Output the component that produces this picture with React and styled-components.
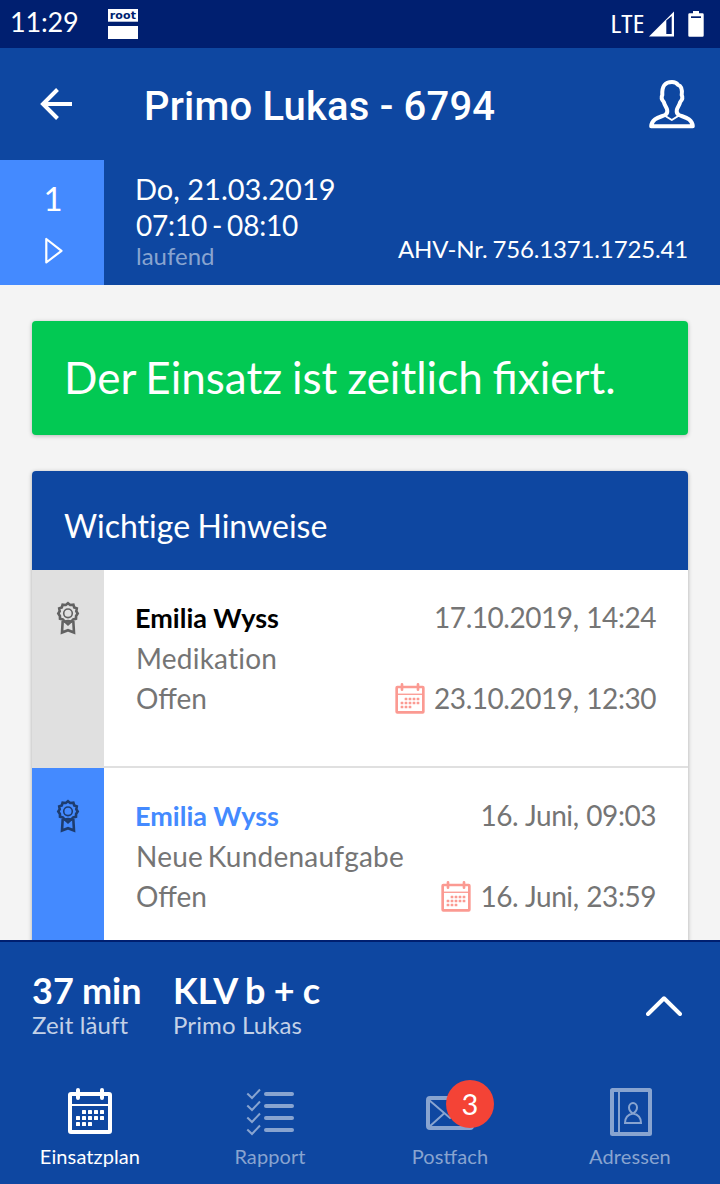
import styled, { createGlobalStyle } from "styled-components";

const colors = {
  status: "#001f70",
  primary: "#0e47a1",
  accent: "#448aff",
  green: "#02c953",
  red: "#f44336",
  muted: "#757575",
  faded: "#88a4d0",
  line: "#e0e0e0",
};

const notes = [
  { name: "Emilia Wyss", created: "17.10.2019, 14:24", title: "Medikation", state: "Offen", due: "23.10.2019, 12:30", unread: false },
  { name: "Emilia Wyss", created: "16. Juni, 09:03", title: "Neue Kundenaufgabe", state: "Offen", due: "16. Juni, 23:59", unread: true },
];

const App = () => {
  return (
    <>
      <GlobalStyle />
      <Screen>
        <StatusBar>
          <Clock>11:29</Clock>
          <RootBadge>
            <RootLabel>root</RootLabel>
            <RootBlock />
          </RootBadge>
          <Network>LTE</Network>
          <SignalIcon />
          <BatteryIcon />
        </StatusBar>
        <Header>
          <BackIcon />
          <Title>Primo Lukas - 6794</Title>
          <PersonIcon />
        </Header>
        <VisitInfo>
          <VisitIndex>
            <VisitNumber>1</VisitNumber>
            <PlayIcon />
          </VisitIndex>
          <VisitTimes>
            <VisitDate>Do, 21.03.2019</VisitDate>
            <VisitTime>07:10 - 08:10</VisitTime>
            <VisitState>laufend</VisitState>
          </VisitTimes>
          <Insurance>AHV-Nr. 756.1371.1725.41</Insurance>
        </VisitInfo>
        <Content>
          <Banner>Der Einsatz ist zeitlich fixiert.</Banner>
          <Card>
            <CardHeader>Wichtige Hinweise</CardHeader>
            {notes.map((note) => (
              <NoteRow key={note.created} {...note} />
            ))}
          </Card>
        </Content>
        <TimerBar>
          <TimerItem $width={141}>
            <TimerValue>37 min</TimerValue>
            <TimerLabel>Zeit läuft</TimerLabel>
          </TimerItem>
          <TimerItem>
            <TimerValue>KLV b + c</TimerValue>
            <TimerLabel>Primo Lukas</TimerLabel>
          </TimerItem>
          <ChevronIcon />
        </TimerBar>
        <TabBar>
          <Tab $active>
            <TabIcon><CalendarIcon size={48} /></TabIcon>
            Einsatzplan
          </Tab>
          <Tab>
            <TabIcon><ChecklistIcon /></TabIcon>
            Rapport
          </Tab>
          <Tab>
            <TabIcon>
              <MailIcon />
              <Badge>3</Badge>
            </TabIcon>
            Postfach
          </Tab>
          <Tab>
            <TabIcon><AddressIcon /></TabIcon>
            Adressen
          </Tab>
        </TabBar>
      </Screen>
    </>
  );
};

export default App;

const NoteRow = ({ name, created, title, state, due, unread }) => (
  <Row>
    <RowMarker $unread={unread}>
      <AwardIcon />
    </RowMarker>
    <RowBody>
      <RowLine>
        <Author $unread={unread}>{name}</Author>
        <DateText $raised>{created}</DateText>
      </RowLine>
      <RowLine>
        <NoteTitle>{title}</NoteTitle>
      </RowLine>
      <RowLine>
        <NoteState>{state}</NoteState>
        <Due>
          <CalendarIcon size={32} />
          <DateText>{due}</DateText>
        </Due>
      </RowLine>
    </RowBody>
  </Row>
);

const SignalIcon = () => (
  <svg width="26" height="26" viewBox="0 0 26 26">
    <path d="M0 25.5 L25 0.5 V25.5 Z M17.3 9.5 V23 H22.7 V5 Z" fill="#fff" fillRule="evenodd" />
  </svg>
);

const BatteryIcon = () => (
  <Battery width="16" height="26" viewBox="0 0 16 26">
    <path d="M5 0 H11 V2.3 H14.5 Q15.7 2.3 15.7 3.5 V24.5 Q15.7 25.8 14.5 25.8 H1.5 Q0.3 25.8 0.3 24.5 V3.5 Q0.3 2.3 1.5 2.3 H5 Z" fill="#fff" />
    <path d="M3 5.3 H13 V7 H3 Z" fill={colors.status} />
  </Battery>
);

const BackIcon = () => (
  <svg width="32" height="32" viewBox="0 0 32 32" fill="none" stroke="#fff" strokeWidth="4">
    <path d="M32 16 H3 M17.5 1.5 L3 16 L17.5 30.5" />
  </svg>
);

const PersonIcon = () => (
  <svg width="46" height="50" viewBox="0 0 46 50" fill="none" stroke="#fff" strokeWidth="4" strokeLinejoin="round">
    <path d="M23 3 C16 3 12.8 7 13.3 16 C12.2 18 13 21 14.8 23 C15.8 27 17.8 28.5 18.2 31 C18.7 34 17.8 35 16 36 C12 38 2.7 38.8 2.2 47.3 H43.8 C43.3 38.8 34 38 30 36 C28.2 35 27.3 34 27.8 31 C28.2 28.5 30.2 27 31.2 23 C33 21 33.8 18 32.7 16 C33.5 10 32.3 6.8 29 5.8 C27.5 3.6 25.8 3 23 3 Z" />
    <path d="M15.5 36.5 L22.8 41 L30 36.5" strokeWidth="2" />
  </svg>
);

const PlayIcon = () => (
  <Play width="18" height="28" viewBox="0 0 18 28" fill="none" stroke="#fff" strokeWidth="2.2" strokeLinejoin="round">
    <path d="M1.3 2 V25.5 L16.5 13.8 Z" />
  </Play>
);

const AwardIcon = () => (
  <svg width="24" height="34" viewBox="0 0 24 34" opacity="0.56" fill="none" stroke="#000" strokeWidth="2.6">
    <path d="M12 2.2 L14.2 4 L17.4 3.7 L18.2 6.4 L20.8 7.4 L20.3 10.2 L21.7 12.5 L20.1 15 L20 17.8 L17.2 18.4 L15.2 20.6 L12 20 L8.8 20.6 L6.8 18.4 L4 17.8 L3.9 15 L2.3 12.5 L3.7 10.2 L3.2 7.4 L5.8 6.4 L6.6 3.7 L9.8 4 Z" />
    <circle cx="12" cy="12.3" r="4.3" strokeWidth="1.6" />
    <path d="M6.7 20 L6 31.5 L12 29.2 L18 31.5 L17.3 20 M9 20.5 L12 23.3 L15 20.5" />
  </svg>
);

const dots = [[2, 0], [3, 0], [4, 0], [5, 0], [1, 1], [2, 1], [3, 1], [4, 1], [5, 1], [1, 2], [2, 2], [3, 2]];

const CalendarIcon = ({ size }) => (
  <svg width={size} height={size} viewBox="0 0 48 48" fill="none" stroke="currentColor" strokeWidth="4">
    <rect x="4" y="6" width="40" height="38" rx="1" />
    <path d="M4 16.9 H44" strokeWidth="2" />
    <path d="M12 2 V10 M36 2 V10" strokeLinecap="round" />
    {dots.map(([col, row]) => (
      <rect key={`${col}-${row}`} x={4 + col * 6} y={22 + row * 6} width="4" height="4" rx="0.6" fill="currentColor" stroke="none" />
    ))}
  </svg>
);

const ChecklistIcon = () => (
  <svg width="48" height="48" viewBox="0 0 48 48" fill="none" stroke="currentColor">
    {[0, 12, 24, 36].map((y) => (
      <g key={y}>
        <path d={`M1.3 ${y + 5.5} L6 ${y + 10} L14 ${y + 1.5}`} strokeWidth="2" />
        <path d={`M20 ${y + 6} H46`} strokeWidth="4" strokeLinecap="round" />
      </g>
    ))}
  </svg>
);

const MailIcon = () => (
  <svg width="48" height="48" viewBox="0 0 48 48" fill="none" stroke="currentColor" strokeWidth="4">
    <rect x="2" y="10" width="44" height="30" rx="2" />
    <path d="M3 12 L24 30 L45 12 M3 39 L18 25.5 M45 39 L30 25.5" strokeWidth="2" />
  </svg>
);

const AddressIcon = () => (
  <svg width="48" height="48" viewBox="0 0 48 48" fill="none" stroke="currentColor" strokeWidth="4">
    <rect x="6" y="2" width="38" height="44" rx="0.5" />
    <path d="M13 2 V46" strokeWidth="2" />
    <path d="M27 25.5 C24.5 24 23 22 23 19.5 C23 17 24.7 15 27 15 C29.3 15 31 17 31 19.5 C31 22 29.5 24 27 25.5 C22 26.5 19 29 19 35 H35 C35 29 32 26.5 27 25.5 Z" strokeWidth="2" />
  </svg>
);

const ChevronIcon = () => (
  <Chevron width="36" height="20" viewBox="0 0 36 20" fill="none" stroke="#fff" strokeWidth="4" strokeLinecap="round" strokeLinejoin="round">
    <path d="M2 18 L18 2.3 L34 18" />
  </Chevron>
);

const GlobalStyle = createGlobalStyle`
  * {
    box-sizing: border-box;
  }
  body {
    margin: 0;
    font-family: Lato, sans-serif;
    font-variant-ligatures: none;
  }
  svg {
    display: block;
    flex-shrink: 0;
  }
`;

const Screen = styled.div`
  width: 720px;
  height: 1184px;
  display: flex;
  flex-direction: column;
  overflow: hidden;
  background: #f4f4f4;
  color: white;
`;

const StatusBar = styled.div`
  height: 48px;
  flex-shrink: 0;
  display: flex;
  align-items: center;
  padding: 0 16px 0 10px;
  background: ${colors.status};
`;

const Clock = styled.div`
  width: 98px;
  font-size: 27px;
  line-height: 40px;
  letter-spacing: -0.2px;
  padding-bottom: 5px;
`;

const RootBadge = styled.div`
  width: 30px;
  height: 30px;
  margin-right: auto;
  display: flex;
  flex-direction: column;
  justify-content: space-between;
`;

const RootLabel = styled.div`
  height: 13px;
  background: white;
  color: ${colors.status};
  border-bottom: 1px solid #b3bcd4;
  font: bold 11px/13px "DejaVu Sans", sans-serif;
  letter-spacing: 0.2px;
  text-align: center;
`;

const RootBlock = styled.div`
  height: 13px;
  background: white;
`;

const Network = styled.div`
  font: 400 25px/32px "Open Sans", sans-serif;
  font-stretch: 75%;
  margin-right: 4px;
  padding-bottom: 2px;
  transform: scaleX(1.2);
  transform-origin: right;
`;

const Battery = styled.svg`
  margin-left: 13px;
`;

const Header = styled.div`
  height: 112px;
  flex-shrink: 0;
  display: flex;
  align-items: center;
  padding: 0 25px 0 40px;
  background: ${colors.primary};
`;

const Title = styled.div`
  flex: 1;
  padding: 6px 0 0 72px;
  font: 500 40px/48px Roboto, sans-serif;
  letter-spacing: 0.18px;
`;

const VisitInfo = styled.div`
  height: 125px;
  flex-shrink: 0;
  display: flex;
  background: ${colors.primary};
`;

const VisitIndex = styled.div`
  width: 104px;
  display: flex;
  flex-direction: column;
  align-items: center;
  padding: 18px 0 0 2px;
  gap: 19px;
  background: ${colors.accent};
`;

const VisitNumber = styled.div`
  font-size: 33px;
  line-height: 40px;
`;

const Play = styled.svg`
  margin-left: 2px;
`;

const VisitTimes = styled.div`
  flex: 1;
  padding: 11px 0 0 31px;
`;

const VisitDate = styled.div`
  font-size: 29px;
  line-height: 36px;
`;

const VisitTime = styled.div`
  padding-left: 1px;
  font-size: 28px;
  line-height: 36px;
  letter-spacing: -0.2px;
  word-spacing: -2px;
`;

const VisitState = styled.div`
  padding-left: 1px;
  font-size: 24px;
  line-height: 26px;
  color: ${colors.faded};
`;

const Insurance = styled.div`
  align-self: flex-end;
  padding: 0 32px 21px 0;
  font-size: 24px;
  line-height: 30px;
  letter-spacing: -0.15px;
  word-spacing: -1px;
`;

const Content = styled.div`
  flex: 1;
  min-height: 0;
  overflow: hidden;
  padding: 36px 32px 0;
`;

const Banner = styled.div`
  height: 114px;
  padding: 0 32px;
  border-radius: 4px;
  background: ${colors.green};
  font-size: 44px;
  line-height: 112px;
  word-spacing: -1.4px;
  font-variant-ligatures: normal;
  box-shadow: 0 1px 4px rgba(0, 0, 0, 0.25);
`;

const Card = styled.div`
  margin-top: 36px;
  border-radius: 4px 4px 0 0;
  background: white;
  box-shadow: 0 1px 4px rgba(0, 0, 0, 0.3);
`;

const CardHeader = styled.div`
  height: 99px;
  padding: 11px 32px 0;
  border-radius: 4px 4px 0 0;
  background: ${colors.primary};
  font-size: 32px;
  line-height: 87px;
  word-spacing: -0.8px;
`;

const Row = styled.div`
  height: 198px;
  display: flex;
`;

const RowMarker = styled.div`
  width: 72px;
  display: flex;
  justify-content: center;
  padding: 31px 1px 0 0;
  background: ${(props) => (props.$unread ? colors.accent : colors.line)};
`;

const RowBody = styled.div`
  flex: 1;
  padding: 28px 32px 0;
  border-bottom: 2px solid ${colors.line};
  color: ${colors.muted};
`;

const RowLine = styled.div`
  display: flex;
  justify-content: space-between;
  height: 40px;
  font-size: 28px;
  line-height: 40px;
`;

const Author = styled.span`
  margin-left: -1px;
  font-weight: bold;
  font-size: 27px;
  color: ${(props) => (props.$unread ? colors.accent : "black")};
`;

const NoteTitle = styled.span`
  letter-spacing: 0.22px;
  word-spacing: -2.6px;
`;

const NoteState = styled.span`
  font-variant-ligatures: normal;
`;

const DateText = styled.span`
  line-height: ${(props) => (props.$raised ? 38 : 40)}px;
  letter-spacing: -0.46px;
  word-spacing: 1.1px;
`;

const Due = styled.span`
  display: flex;
  align-items: center;
  gap: 8px;

  svg {
    margin-top: 1px;
    color: #fb9a92;
  }
`;

const TimerBar = styled.div`
  height: 132px;
  flex-shrink: 0;
  display: flex;
  padding: 27px 38px 0 32px;
  border-top: 2px solid ${colors.status};
  background: ${colors.primary};
`;

const TimerItem = styled.div`
  width: ${(props) => (props.$width ? `${props.$width}px` : "auto")};
`;

const TimerValue = styled.div`
  font-size: 36px;
  font-weight: bold;
  line-height: 42px;
  word-spacing: -0.6px;
`;

const TimerLabel = styled.div`
  font-size: 24px;
  line-height: 28px;
  letter-spacing: 0.13px;
  color: #c3d1e7;
`;

const Chevron = styled.svg`
  margin: 27px 0 0 auto;
`;

const TabBar = styled.div`
  height: 112px;
  flex-shrink: 0;
  display: grid;
  grid-template-columns: repeat(4, 1fr);
  background: ${colors.primary};
`;

const Tab = styled.div`
  display: flex;
  flex-direction: column;
  align-items: center;
  padding-top: 16px;
  font-size: 20px;
  line-height: 40px;
  letter-spacing: 0.1px;
  font-feature-settings: "liga" 1;
  color: ${(props) => (props.$active ? "white" : colors.faded)};
`;

const TabIcon = styled.div`
  position: relative;
  height: 48px;
`;

const Badge = styled.div`
  position: absolute;
  left: 20px;
  top: -8px;
  width: 48px;
  height: 48px;
  border-radius: 50%;
  background: ${colors.red};
  color: white;
  font-size: 29px;
  line-height: 47px;
  text-align: center;
`;
